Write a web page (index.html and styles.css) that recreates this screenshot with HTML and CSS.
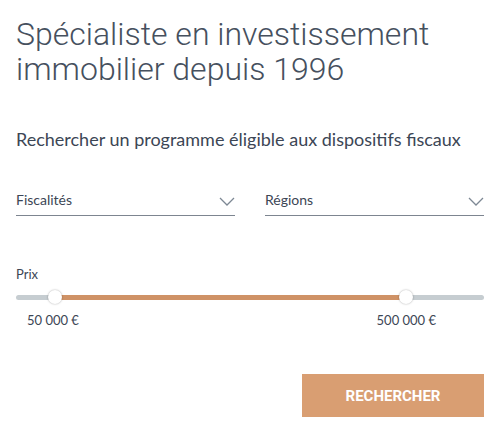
FILE: index.html
```html
<!DOCTYPE html>
<html lang="fr">
<head>
    <meta charset="UTF-8">
    <meta name="viewport" content="width=device-width, initial-scale=1.0">
    <title>Recherche</title>
    <link rel="stylesheet" href="styles.css">
</head>
<body>
    <div class="search-box">
        <h1>Spécialiste en investissement immobilier depuis 1996</h1>
        <p class="lead">Rechercher un programme éligible aux dispositifs fiscaux</p>
        <div class="selects">
            <div class="select">
                <span>Fiscalités</span>
                <svg width="16" height="9" viewBox="0 0 16 9"><path d="M1 1l7 7 7-7" fill="none" stroke="#7d8894" stroke-width="1.3"/></svg>
            </div>
            <div class="select">
                <span>Régions</span>
                <svg width="16" height="9" viewBox="0 0 16 9"><path d="M1 1l7 7 7-7" fill="none" stroke="#7d8894" stroke-width="1.3"/></svg>
            </div>
        </div>
        <div class="price">
            <label>Prix</label>
            <div class="track">
                <div class="fill" style="left: 8.3%; right: 16.7%;"></div>
                <span class="thumb" style="left: 8.3%;"></span>
                <span class="thumb" style="left: 83.3%;"></span>
            </div>
            <div class="values">
                <span>50 000 €</span>
                <span>500 000 €</span>
            </div>
        </div>
        <div class="actions">
            <button type="button">RECHERCHER</button>
        </div>
    </div>
</body>
</html>
```

FILE: styles.css
```css
body {
    margin: 0;
    padding: 0;
    background-color: #fff;
    font-family: Lato, "Open Sans", sans-serif;
    color: #3c4655;
}
.search-box {
    padding: 17px 16px 0 16px;
}
h1 {
    font-family: Roboto, sans-serif;
    font-weight: 300;
    font-size: 32px;
    line-height: 35px;
    color: #46505e;
    margin: 0;
    width: 440px;
}
.lead {
    font-size: 18px;
    line-height: 21px;
    margin: 42px 0 0 0;
    color: #3c4655;
}
.selects {
    display: flex;
    gap: 30px;
    margin-top: 41px;
}
.select {
    flex: 1;
    display: flex;
    justify-content: space-between;
    align-items: center;
    border-bottom: 1px solid #7d8590;
    padding: 0 0 7px 0;
    font-size: 14px;
    color: #3c4655;
}
.select svg {
    margin-top: 4px;
}
.price {
    margin-top: 50px;
}
.price label {
    display: block;
    font-size: 13px;
    color: #3c4655;
}
.track {
    position: relative;
    height: 5px;
    border-radius: 3px;
    background-color: #c6cdd1;
    margin-top: 13px;
}
.fill {
    position: absolute;
    top: 0;
    bottom: 0;
    background-color: #cf9266;
}
.thumb {
    position: absolute;
    top: -5px;
    width: 14px;
    height: 14px;
    margin-left: -7px;
    border-radius: 50%;
    background-color: #fff;
    box-shadow: 0 0 2px rgba(0, 0, 0, 0.35);
}
.values {
    display: flex;
    justify-content: space-between;
    padding: 0 48px 0 11px;
    margin-top: 12px;
    font-size: 13px;
    color: #3c4655;
}
.actions {
    display: flex;
    justify-content: flex-end;
    margin-top: 46px;
}
button {
    width: 182px;
    height: 43px;
    border: none;
    background-color: #d99e72;
    color: #fff;
    font-family: Roboto, sans-serif;
    font-weight: 700;
    font-size: 15px;
    cursor: pointer;
}
```
